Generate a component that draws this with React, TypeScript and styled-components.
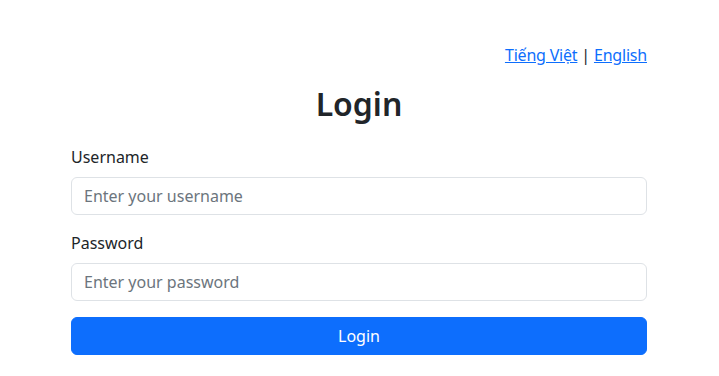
import React from 'react';
import styled, { createGlobalStyle } from 'styled-components';

const GlobalStyle = createGlobalStyle`
    * { box-sizing: border-box; }
    body {
        margin: 0;
        background: #fff;
        color: #212529;
        font-family: "Noto Sans", "Open Sans", "Liberation Sans", sans-serif;
        font-size: 16px;
        line-height: 1.5;
    }
`

const Container = styled.div`
    width: 576px;
    margin: 0 72px 0 71px;
    padding-top: 43px;
`

const LangBar = styled.div`
    text-align: right;
    height: 24px;
    margin-bottom: 18px;
    letter-spacing: -0.2px;
`

const LangLink = styled.a`
    color: #0d6efd;
    text-decoration: underline;
    cursor: pointer;
`

const Title = styled.h2`
    margin: 0 0 22px;
    text-align: center;
    font-size: 32px;
    line-height: 38px;
    font-weight: 600;
`

const Field = styled.div`
    margin-bottom: 16px;
`

const Label = styled.label`
    display: block;
    margin-bottom: 8px;
`

const Input = styled.input`
    display: block;
    width: 100%;
    height: 38px;
    padding: 6px 12px;
    font: inherit;
    color: #212529;
    border: 1px solid #dee2e6;
    border-radius: 6px;
    outline: none;
    &::placeholder {
        color: #6c757d;
    }
`

const Button = styled.button`
    display: block;
    width: 100%;
    height: 38px;
    font: inherit;
    color: #fff;
    background: #0d6efd;
    border: 1px solid #0d6efd;
    border-radius: 6px;
    cursor: pointer;
`

function App() {
    return (
        <>
            <GlobalStyle />
            <Container>
                <LangBar>
                    <LangLink>Tiếng Việt</LangLink> | <LangLink>English</LangLink>
                </LangBar>
                <Title>Login</Title>
                <form onSubmit={e => e.preventDefault()}>
                    <Field>
                        <Label htmlFor="username">Username</Label>
                        <Input id="username" type="text" placeholder="Enter your username" />
                    </Field>
                    <Field>
                        <Label htmlFor="password">Password</Label>
                        <Input id="password" type="password" placeholder="Enter your password" />
                    </Field>
                    <Button type="submit">Login</Button>
                </form>
            </Container>
        </>
    );
}

export default App;
